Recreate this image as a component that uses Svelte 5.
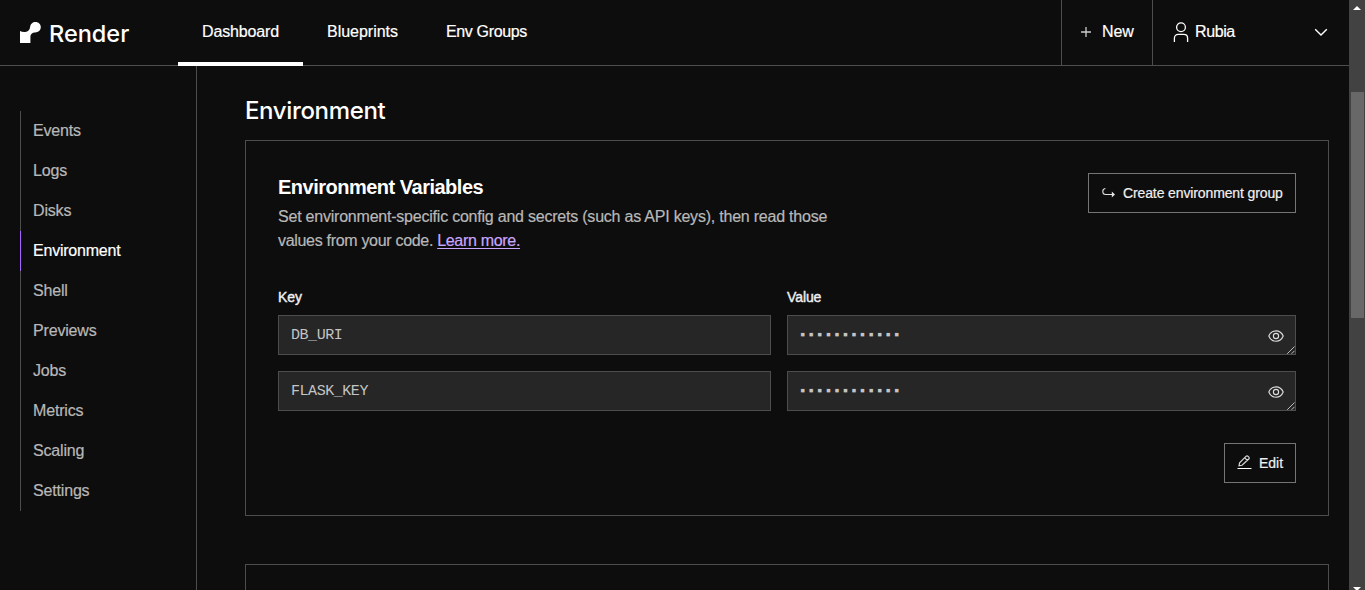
<script>
  const tabs = [
    { label: 'Dashboard', active: true, spacing: '-0.14px' },
    { label: 'Blueprints', spacing: '-0.02px' },
    { label: 'Env Groups', spacing: '-0.35px' }
  ];
  const links = ['Events', 'Logs', 'Disks', 'Environment', 'Shell', 'Previews', 'Jobs', 'Metrics', 'Scaling', 'Settings'];
  const variables = ['DB_URI', 'FLASK_KEY'];
  const mask = '▪'.repeat(12);
</script>

<div class="window">
  <div class="app">
    <header>
      <div class="brand">
        <svg width="22" height="22" viewBox="0 0 22 22" fill="#fff"><path d="M15.5 0C12.7 0 10.4 2.1 10.1 4.9C9.8 7.6 8 9.7 5.2 9.9C3.2 10 1.4 9.8 0 9V21H10.4V14.6C10.4 12.1 12.3 10.4 14.8 10.4C18 10.6 20.8 8.3 20.8 5.2C20.8 2.2 18.5 0 15.5 0Z" /></svg>
        <span>Render</span>
      </div>
      <nav class="tabs">
        {#each tabs as tab}
          <a class:active={tab.active}><span style:letter-spacing={tab.spacing}>{tab.label}</span></a>
        {/each}
      </nav>
      <button class="new">
        <svg width="12" height="12" viewBox="0 0 12 12" fill="none" stroke="#ccc" stroke-width="1.3"><path d="M1 6H11M6 1V11" /></svg>
        <span>New</span>
      </button>
      <button class="account">
        <svg width="16" height="21" viewBox="0 0 16 21" fill="none" stroke="#fff" stroke-width="1.3"><circle cx="8" cy="5.2" r="4.4" /><path d="M1.4 20V16.2C1.4 13.8 3 12.4 5.3 12.4H10.7C13 12.4 14.6 13.8 14.6 16.2V20" /></svg>
        <span>Rubia</span>
        <svg class="chevron" width="14" height="9" viewBox="0 0 14 9" fill="none" stroke="#fff" stroke-width="1.4"><path d="M1.2 1.2L7 7L12.8 1.2" /></svg>
      </button>
    </header>
    <div class="body">
      <aside>
        <ul>
          {#each links as link}
            <li class:current={link === 'Environment'}>{link}</li>
          {/each}
        </ul>
      </aside>
      <main>
        <h1>Environment</h1>
        <section class="card">
          <div class="intro">
            <div>
              <h2>Environment Variables</h2>
              <p>Set environment-specific config and secrets (such as API keys), then read those<br /><span class="second">values from your code. <a>Learn more.</a></span></p>
            </div>
            <button class="outline create">
              <svg width="14" height="12" viewBox="0 0 14 12" fill="none" stroke="#e5e5e5" stroke-width="1.1"><path d="M3.4 1.5C1.7 1.8 .8 2.8 .8 4.2C.8 6.4 2 7.5 3.8 7.5H12" /><path d="M9.8 4.5L13 7.5L9.8 10.5Z" fill="#e5e5e5" stroke="none" /></svg>
              <span>Create environment group</span>
            </button>
          </div>
          <div class="grid">
            <label>Key</label><label>Value</label>
            {#each variables as name}
              <div class="field">{name}</div>
              <div class="field secret">
                <span class="mask">{mask}</span>
                <svg class="eye" width="16" height="12" viewBox="0 0 16 12" fill="none" stroke="#ddd" stroke-width="1.15"><path d="M.8 6C2.2 2.6 4.8 .8 8 .8S13.8 2.6 15.2 6C13.8 9.4 11.2 11.2 8 11.2S2.2 9.4 .8 6Z" /><circle cx="8" cy="6" r="2.6" /></svg>
                <svg class="grip" width="8" height="8" viewBox="0 0 8 8" stroke="#bbb" stroke-width="1"><path d="M.2 7.8L7.5 .5M4.5 7.8L7.5 4.8" /></svg>
              </div>
            {/each}
          </div>
          <div class="actions">
            <button class="outline edit">
              <svg width="15" height="15" viewBox="0 0 15 15" fill="none" stroke="#d8d8d8" stroke-width="1.2"><path d="M.5 13.5H14.5" stroke="#fff" stroke-width="1" /><path d="M2 10.8L2.6 7.8L9.2 1.2C10.5.3 12.9 2.3 12 3.8L5 10.3Z M7.8 2.8L10.3 5.3" /></svg>
              <span>Edit</span>
            </button>
          </div>
        </section>
        <section class="card next"></section>
      </main>
    </div>
  </div>
  <div class="scrollbar">
    <svg class="up" width="8" height="4" viewBox="0 0 8 4"><path d="M0 4L4 0L8 4Z" fill="#fff" /></svg>
    <i class="thumb"></i>
    <svg class="down" width="8" height="4" viewBox="0 0 8 4"><path d="M0 0L4 4L8 0Z" fill="#fff" /></svg>
  </div>
</div>

<style>
  :global(body) { margin: 0; background: #0d0d0d; overflow: hidden; }
  * { box-sizing: border-box; }
  svg { display: block; flex: none; }
  button { background: none; border: 0; padding: 0; margin: 0; font: inherit; color: inherit; display: flex; align-items: center; white-space: nowrap; }
  .window { display: flex; height: 590px; overflow: hidden; font: 16px/24px "Liberation Sans", Arial, sans-serif; color: #fff; -webkit-text-stroke: .2px currentColor; }
  .app { flex: 1; min-width: 0; display: flex; flex-direction: column; background: #0d0d0d; }
  header { height: 66px; flex: none; display: flex; border-bottom: 1px solid #4d4d4d; }
  .brand { width: 178px; padding: 22px 0 0 20px; display: flex; gap: 7px; }
  .brand span { font: 500 23.5px/24px Inter, sans-serif; letter-spacing: 0; -webkit-text-stroke: 0; }
  .tabs { display: flex; flex: 1; }
  .tabs a { height: 66px; padding: 20px 24px 0; border-bottom: 4px solid transparent; white-space: nowrap; }
  .tabs a.active { border-color: #fff; }
  .new { width: 91px; border-left: 1px solid #4d4d4d; padding: 0 0 1px 18px; gap: 10px; }
  .new span { letter-spacing: -.1px; }
  .account { width: 197px; border-left: 1px solid #4d4d4d; padding: 0 21px 1px 20px; gap: 6px; }
  .account span { letter-spacing: -.4px; }
  .chevron { margin-left: auto; }
  .body { flex: 1; min-height: 0; display: flex; }
  aside { width: 197px; flex: none; border-right: 1px solid #4d4d4d; padding: 45px 0 0 20px; }
  ul { list-style: none; margin: 0; padding: 0; }
  li { height: 40px; line-height: 39px; padding-left: 12px; border-left: 1px solid #4d4d4d; color: #b8b8b8; letter-spacing: -0.17px; }
  li.current { border-color: #a366ff; color: #fff; letter-spacing: -.22px; }
  main { flex: 1; padding: 29px 20px 0 48px; min-width: 0; }
  h1 { margin: 0 0 13px; font: 500 24px/32px Inter, sans-serif; letter-spacing: -.35px; -webkit-text-stroke: 0; }
  .card { height: 376px; border: 1px solid #4d4d4d; padding: 32px; }
  .next { margin-top: 48px; }
  .intro { display: flex; justify-content: space-between; align-items: flex-start; height: 114px; }
  h2 { margin: 0; font-size: 20px; line-height: 28px; font-weight: 700; letter-spacing: -0.5px; padding-bottom: 4px; -webkit-text-stroke: 0; }
  p { margin: 0; color: #b8b8b8; white-space: nowrap; letter-spacing: -0.22px; }
  .second { letter-spacing: -.31px; }
  p a { color: #c9a6ff; text-decoration: underline; text-underline-offset: 2px; }
  .outline { height: 40px; border: 1px solid #757575; font-size: 14px; color: #f0f0f0; padding-left: 13px; }
  .create { width: 208px; gap: 7px; letter-spacing: -.12px; }
  .edit { width: 72px; gap: 7px; padding-left: 12px; }
  .edit svg { margin-top: -1px; }
  .grid { display: grid; grid-template-columns: 493px 509px; column-gap: 16px; row-gap: 16px; }
  label { height: 12px; line-height: 20px; font-size: 14px; letter-spacing: -.1px; color: #f0f0f0; -webkit-text-stroke: .4px #f0f0f0; }
  .field { height: 40px; background: #262626; border: 1px solid #4d4d4d; padding: 2px 12px 0; display: flex; align-items: center; font: 15px/20px "Liberation Mono", monospace; letter-spacing: -.45px; color: #c4c4c4; -webkit-text-stroke: 0; }
  .secret { padding: 0 11px 0 10.5px; justify-content: space-between; position: relative; }
  .mask { font-size: 14px; letter-spacing: .15px; }
  .eye { margin-top: 1px; }
  .grip { position: absolute; right: 0; bottom: 0; }
  .actions { display: flex; justify-content: flex-end; margin-top: 32px; }
  .scrollbar { width: 16px; background: #424242; display: flex; flex-direction: column; align-items: center; padding-top: 6px; flex: none; }
  .thumb { width: 13px; height: 226px; margin-top: 82px; background: #686868; }
  .down { margin-top: auto; position: relative; top: 1px; }
</style>
